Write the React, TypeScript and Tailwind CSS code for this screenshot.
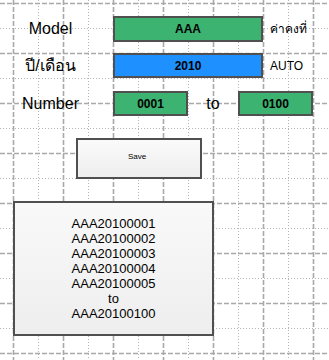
import React from "react";

const cols = Array.from({ length: 14 }, (_, i) => i);
const rows = Array.from({ length: 15 }, (_, i) => i);

const GridBackground = () => (
  <svg
    className="pointer-events-none absolute inset-0"
    width="329"
    height="360"
    aria-hidden="true"
  >
    {cols.map((i) => {
      const x = 13 + i * 25 + 0.5;
      const major = i % 2 === 0;
      return (
        <line
          key={`v${i}`}
          x1={x}
          y1={0}
          x2={x}
          y2={360}
          stroke={major ? "#a9a9a9" : "#b4b4b4"}
          strokeWidth={major ? 1.6 : 1}
          strokeDasharray={major ? "5 2" : "1 2"}
        />
      );
    })}
    {rows.map((i) => {
      const y = 3 + i * 25 + 0.5;
      const major = i % 2 === 0;
      return (
        <line
          key={`h${i}`}
          x1={0}
          y1={y}
          x2={329}
          y2={y}
          stroke={major ? "#a9a9a9" : "#b4b4b4"}
          strokeWidth={major ? 1.6 : 1}
          strokeDasharray={major ? "5 2" : "1 2"}
        />
      );
    })}
  </svg>
);

const results = [
  "AAA20100001",
  "AAA20100002",
  "AAA20100003",
  "AAA20100004",
  "AAA20100005",
  "to",
  "AAA20100100",
];

export default function App() {
  return (
    <div className="relative h-[360px] w-[329px] overflow-hidden bg-white font-['Liberation_Sans','DejaVu_Sans',sans-serif] text-black">
      <GridBackground />

      <div className="relative flex flex-col pl-[13px]">
        {/* Model */}
        <div className="mt-[16px] flex h-[26px] items-center">
          <div className="w-[75px] text-center text-[16px]">Model</div>
          <div className="ml-[25px] flex h-full w-[150px] items-center justify-center border-2 border-[#505050] bg-[#3cb371] text-[12px] font-bold">
            AAA
          </div>
          <div className="ml-[7px] text-[12px]">ค่าคงที่</div>
        </div>

        {/* Year / month */}
        <div className="mt-[11px] flex h-[25px] items-center">
          <div className="w-[75px] text-center text-[16px]">ปี/เดือน</div>
          <div className="ml-[25px] flex h-full w-[150px] items-center justify-center border-2 border-[#505050] bg-[#1e90ff] text-[12px] font-bold">
            2010
          </div>
          <div className="ml-[7px] text-[12px]">AUTO</div>
        </div>

        {/* Number range */}
        <div className="mt-[13px] flex h-[25px] items-center">
          <div className="w-[75px] text-center text-[16px]">Number</div>
          <div className="ml-[25px] flex h-full w-[75px] items-center justify-center border-2 border-[#505050] bg-[#3cb371] text-[12px] font-bold">
            0001
          </div>
          <div className="w-[50px] text-center text-[16px]">to</div>
          <div className="flex h-full w-[75px] items-center justify-center border-2 border-[#505050] bg-[#3cb371] text-[12px] font-bold">
            0100
          </div>
        </div>

        <button
          type="button"
          className="mt-[22px] ml-[63px] flex h-[41px] w-[126px] items-center justify-center border-2 border-[#505050] bg-gradient-to-b from-[#fafafa] to-[#eeeeee] pr-[4px] pb-[3px] text-[8px]"
        >
          Save
        </button>

        <div className="mt-[22px] flex h-[135px] w-[201px] flex-col items-center justify-center border-2 border-[#505050] bg-gradient-to-b from-[#f9f9f9] to-[#eeeeee] text-[13px] leading-[15px]">
          {results.map((line, i) => (
            <div key={i}>{line}</div>
          ))}
        </div>
      </div>
    </div>
  );
}
